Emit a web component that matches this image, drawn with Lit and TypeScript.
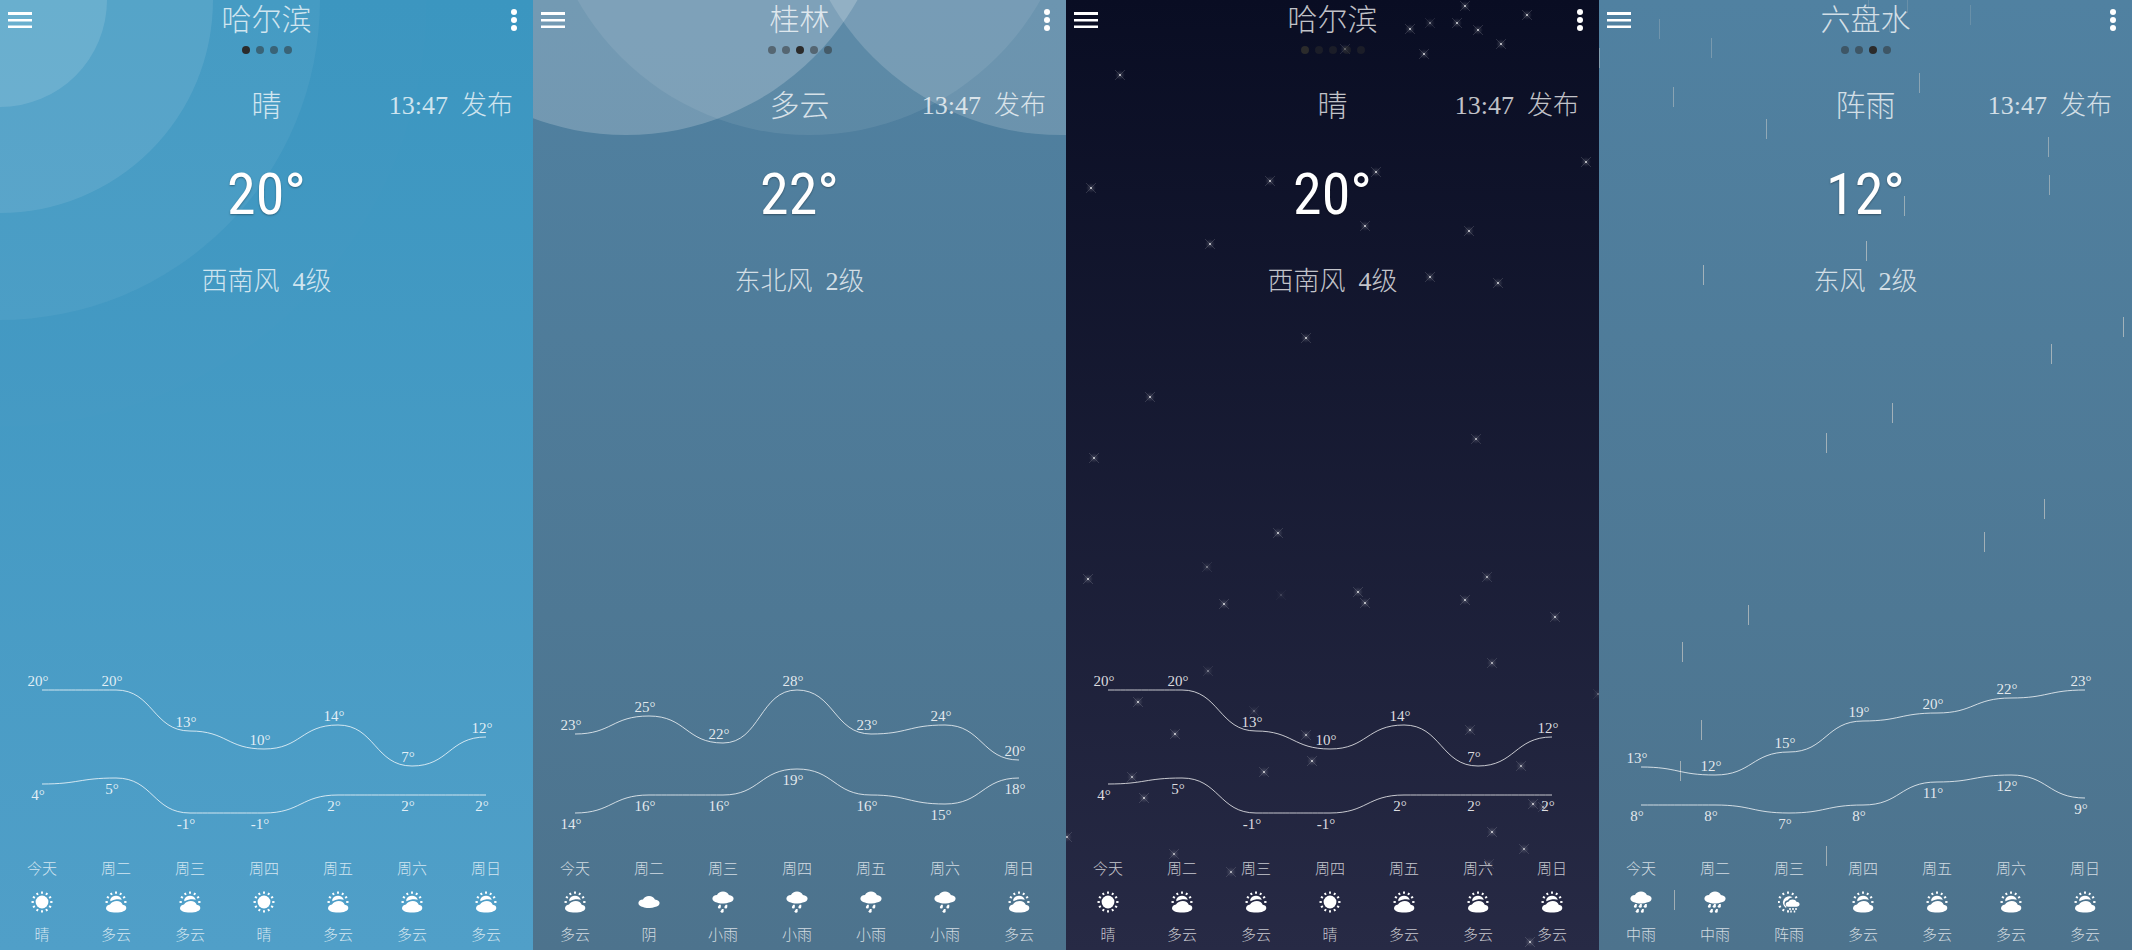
import { LitElement, html, svg, css } from 'lit';
import { customElement, property } from 'lit/decorators.js';
import { classMap } from 'lit/directives/class-map.js';

type Sky = 'clear' | 'cloudy' | 'night' | 'rain';
type Icon = 'sun' | 'partly' | 'overcast' | 'light-rain' | 'rain' | 'shower';

interface Day {
  label: string;
  icon: Icon;
  text: string;
  high: number;
  low: number;
}

interface City {
  name: string;
  sky: Sky;
  condition: string;
  time: string;
  temp: number;
  wind: string;
  force: string;
  pages: number;
  page: number;
  days: Day[];
}

const WEEK = ['今天', '周二', '周三', '周四', '周五', '周六', '周日'];

const ICON_TEXT: Record<Icon, string> = {
  sun: '晴',
  partly: '多云',
  overcast: '阴',
  'light-rain': '小雨',
  rain: '中雨',
  shower: '阵雨',
};

const week = (icons: Icon[], highs: number[], lows: number[]): Day[] =>
  WEEK.map((label, i) => ({
    label,
    icon: icons[i],
    text: ICON_TEXT[icons[i]],
    high: highs[i],
    low: lows[i],
  }));

const harbin = week(
  ['sun', 'partly', 'partly', 'sun', 'partly', 'partly', 'partly'],
  [20, 20, 13, 10, 14, 7, 12],
  [4, 5, -1, -1, 2, 2, 2],
);

const CITIES: City[] = [
  {
    name: '哈尔滨', sky: 'clear', condition: '晴', time: '13:47', temp: 20,
    wind: '西南风', force: '4级', pages: 4, page: 0, days: harbin,
  },
  {
    name: '桂林', sky: 'cloudy', condition: '多云', time: '13:47', temp: 22,
    wind: '东北风', force: '2级', pages: 5, page: 2,
    days: week(
      ['partly', 'overcast', 'light-rain', 'light-rain', 'light-rain', 'light-rain', 'partly'],
      [23, 25, 22, 28, 23, 24, 20],
      [14, 16, 16, 19, 16, 15, 18],
    ),
  },
  {
    name: '哈尔滨', sky: 'night', condition: '晴', time: '13:47', temp: 20,
    wind: '西南风', force: '4级', pages: 5, page: 0, days: harbin,
  },
  {
    name: '六盘水', sky: 'rain', condition: '阵雨', time: '13:47', temp: 12,
    wind: '东风', force: '2级', pages: 4, page: 2,
    days: week(
      ['rain', 'rain', 'shower', 'partly', 'partly', 'partly', 'partly'],
      [13, 12, 15, 19, 20, 22, 23],
      [8, 8, 7, 8, 11, 12, 9],
    ),
  },
];

// x, y and brightness of each star
const STARS: [number, number, number][] = [
  [399, 6, 0.9], [461, 15, 0.9], [364, 23, 0.6], [391, 23, 0.9], [344, 29, 0.9],
  [412, 30, 0.9], [435, 44, 0.9], [279, 49, 0.7], [358, 54, 0.9], [54, 75, 0.9],
  [520, 162, 0.9], [310, 172, 0.9], [204, 181, 0.9], [25, 188, 0.9], [299, 226, 0.9],
  [403, 231, 0.9], [144, 244, 0.9], [364, 277, 0.9], [432, 283, 0.9], [240, 338, 0.9],
  [84, 397, 0.9], [410, 439, 0.8], [28, 458, 0.9], [212, 533, 0.9], [141, 567, 0.5],
  [22, 579, 0.9], [215, 595, 0.2], [421, 577, 0.8], [292, 592, 0.9], [158, 604, 0.9],
  [299, 603, 0.9], [399, 600, 0.9], [489, 617, 0.9], [426, 663, 0.8], [142, 671, 0.5],
  [72, 702, 0.9], [188, 711, 0.4], [109, 734, 0.9], [240, 735, 0.8], [404, 730, 0.8],
  [246, 761, 0.9], [198, 772, 0.9], [455, 766, 0.8], [66, 777, 0.8], [78, 798, 0.9],
  [467, 804, 0.9], [477, 807, 0.7], [426, 832, 0.9], [1, 837, 0.8], [458, 849, 0.8],
  [108, 854, 0.8], [165, 872, 0.8], [423, 864, 0.6], [464, 942, 0.9], [532, 694, 0.4],
];

// x, top and opacity of each raindrop
const DROPS: [number, number, number][] = [
  [308, -7, 0.15], [269, -13, 0.15], [290, 12, 0.12], [371, 5, 0.15], [60, 19, 0.2],
  [112, 38, 0.25], [0, 48, 0.3], [320, 73, 0.35], [74, 87, 0.35], [167, 119, 0.4],
  [449, 137, 0.4], [450, 175, 0.4], [305, 196, 0.45], [267, 241, 0.5], [104, 265, 0.5],
  [524, 317, 0.5], [452, 344, 0.5], [293, 403, 0.5], [227, 433, 0.5], [445, 499, 0.5],
  [385, 532, 0.5], [149, 605, 0.5], [83, 642, 0.5], [102, 720, 0.5], [81, 761, 0.5],
  [227, 846, 0.5], [75, 890, 0.5],
];

@customElement('sky-backdrop')
export class SkyBackdrop extends LitElement {
  @property() sky: Sky = 'clear';

  static styles = css`
    :host { display: block; overflow: hidden; }
    svg { display: block; width: 100%; height: 100%; }
    .white { fill: #fff; }
    .arm { stroke: #fff; stroke-width: 1; stroke-opacity: 0.16; }
    .drop { fill: #f5e8da; }
  `;

  private shapes() {
    switch (this.sky) {
      case 'clear':
        return svg`
          <circle class="white" r="427" opacity="0.008"></circle>
          <circle class="white" r="320" opacity="0.05"></circle>
          <circle class="white" r="213" opacity="0.09"></circle>
          <circle class="white" r="107" opacity="0.12"></circle>`;
      case 'cloudy':
        return svg`
          <circle class="white" cx="93" cy="-131" r="266" opacity="0.2"></circle>
          <circle class="white" cx="276" cy="-131" r="266" opacity="0.08"></circle>
          <circle class="white" cx="528" cy="-131" r="266" opacity="0.16"></circle>`;
      case 'night':
        return svg`
          <defs>
            <radialGradient id="glow">
              <stop offset="0" stop-color="#fff" stop-opacity="0.2"></stop>
              <stop offset="1" stop-color="#fff" stop-opacity="0"></stop>
            </radialGradient>
          </defs>
          ${STARS.map(([x, y, o]) => svg`
            <g transform="translate(${x} ${y})" opacity=${o}>
              <circle r="5" fill="url(#glow)"></circle>
              <path class="arm" d="M-5-5 5 5M5-5-5 5"></path>
              <circle class="white" r="1" opacity="0.9"></circle>
            </g>`)}`;
      default:
        return DROPS.map(([x, y, o]) => svg`
          <rect class="drop" x=${x} y=${y} width="1" height="20" opacity=${o}></rect>`);
    }
  }

  render() {
    return html`<svg aria-hidden="true">${this.shapes()}</svg>`;
  }
}

const RAYS = Array.from({ length: 12 }, (_, i) => i * 30);

const ray = (angle: number) => svg`
  <path d="M0-10.5V-8.2" transform="rotate(${angle})" stroke="#fff" stroke-width="1.9"></path>`;

@customElement('weather-icon')
export class WeatherIcon extends LitElement {
  @property() name: Icon = 'sun';

  static styles = css`
    :host { display: block; width: 22px; height: 22px; }
    svg { display: block; width: 100%; height: 100%; fill: #fff; }
  `;

  private glyph() {
    const cloud = svg`<path d="M5 11.6C2.2 11.2.4 9.600.4 7.600.4 5.600 2.300 4.100 5 4 6 1.900 8.300.5 11 .5 13.800.5 15.900 1.900 16.900 3.900 19.700 4.100 21.600 5.600 21.600 7.600 21.600 9.700 19.600 11.300 16.800 11.500 15 12.300 13 12.600 11 12.500 9 12.600 6.700 12.400 5 11.600Z"></path>`;
    const drop = (x: number, y: number) => svg`
      <path d="M${x + 1.2} ${y} h1.600 v2.200 a1.500 1.500 0 0 1 -3 0z"></path>`;
    switch (this.name) {
      case 'sun':
        return svg`<g transform="translate(11 11)"><circle r="6.400"></circle>${RAYS.map(ray)}</g>`;
      case 'partly':
        return svg`
          <g transform="translate(11 11)">${[-90, -60, -30, 0, 30, 60, 90].map(ray)}</g>
          <path d="M5.200 8.700C6 6.300 8.200 4.700 11 4.700 13.800 4.700 16 6.300 16.800 8.700 15.500 8.200 13.500 8 11.500 8.300 9.500 8.500 7.500 9.200 5.400 10.200Z"></path>
          <path d="M1 17.300C1 15.300 2.600 13.900 5 13.500 6.200 11.300 9 9.900 11.800 9.900 14.700 9.900 17 11.500 17.700 13.700 20 14 21.300 15.200 21.300 17 21.300 19.800 17 21.600 11.100 21.600 5.200 21.600 1 20 1 17.300Z"></path>`;
      case 'overcast':
        return svg`<g transform="translate(0 4.500)">${cloud}</g>`;
      case 'light-rain':
        return svg`${cloud}${drop(6, 13.8)}${drop(12.500, 13.8)}${drop(8.800, 18)}`;
      case 'rain':
        return svg`${cloud}${drop(4, 13)}${drop(9, 13)}${drop(14, 13)}${drop(6, 18)}${drop(11, 18)}`;
      default:
        return svg`
          <g transform="translate(10 11)">${[180, 210, 240, 270, 300, 330, 0, 30, 60].map(ray)}</g>
          <path d="M14.500 6.200A6.200 6.200 0 1 0 8 17L8.500 15.400C6.700 14.500 6.300 13 6.700 11.500 7.200 9.900 8.700 9.300 9.800 9.200 10.600 7.600 12.400 6.700 14.500 6.200Z"></path>
          <path d="M10.200 15.700C8.600 15.400 7.700 14.500 7.700 13.200 7.700 11.800 8.900 10.800 10.500 10.700 11.200 9.200 12.700 8.400 14.500 8.400 16.300 8.400 17.800 9.300 18.400 10.700 20.400 10.800 21.600 11.900 21.600 13.300 21.600 14.700 20.300 15.700 18.500 15.800Z"></path>
          <path d="M12 17v2M15 17v2M18 17v2M13 19.500v2M16.500 19.500v2" stroke="#fff" stroke-width="1.500"></path>`;
    }
  }

  render() {
    return html`<svg viewBox="0 0 22 22" aria-hidden="true">${this.glyph()}</svg>`;
  }
}

@customElement('temperature-chart')
export class TemperatureChart extends LitElement {
  @property({ attribute: false }) days: Day[] = [];

  static styles = css`
    :host { display: block; }
    svg { display: block; width: 100%; height: auto; overflow: visible; }
    .line { fill: none; stroke: rgba(255, 255, 255, 0.75); stroke-width: 1; }
    .value {
      fill: rgba(255, 255, 255, 0.85);
      font-size: 15px;
      text-anchor: middle;
    }
  `;

  render() {
    const step = 74;
    const top = 24;
    const span = 123;
    const max = Math.max(...this.days.map((d) => d.high));
    const min = Math.min(...this.days.map((d) => d.low));
    const x = (i: number) => step / 2 + i * step;
    const y = (t: number) => Math.round(top + ((max - t) / (max - min)) * span);
    const curve = (temps: number[]) =>
      temps
        .map((t, i) =>
          i === 0
            ? `M${x(0)} ${y(t)}`
            : `C${x(i) - step / 2} ${y(temps[i - 1])} ${x(i) - step / 2} ${y(t)} ${x(i)} ${y(t)}`,
        )
        .join('');
    return html`
      <svg viewBox="0 0 ${step * 7} 171" role="img" aria-label="七日气温">
        <path class="line" d=${curve(this.days.map((d) => d.high))}></path>
        <path class="line" d=${curve(this.days.map((d) => d.low))}></path>
        ${this.days.map((d, i) => svg`
          <text class="value" x=${x(i) - 4} y=${y(d.high) - 4}>${d.high}°</text>
          <text class="value" x=${x(i) - 4} y=${y(d.low) + 16}>${d.low}°</text>`)}
      </svg>
    `;
  }
}

@customElement('city-weather')
export class CityWeather extends LitElement {
  @property({ attribute: false }) city!: City;

  static styles = css`
    :host { display: block; min-width: 0; }
    .panel {
      position: relative;
      isolation: isolate;
      display: flex;
      flex-direction: column;
      min-height: 100vh;
      overflow: hidden;
      color: rgba(255, 255, 255, 0.75);
    }
    .clear { background: linear-gradient(#3b96c0, #509fc8); }
    .cloudy, .rain { background: linear-gradient(#5081a1, #4d738d); }
    .night { background: linear-gradient(#090d23, #272a45); }
    .backdrop { position: absolute; inset: 0; z-index: -1; }
    .bar {
      display: flex;
      align-items: center;
      justify-content: space-between;
      height: 40px;
      padding: 0 8px;
    }
    h1 { margin: 0; font-size: 30px; line-height: 40px; font-weight: inherit; }
    .tool {
      display: flex;
      justify-content: center;
      width: 24px;
      padding: 0;
      border: 0;
      background: none;
      cursor: pointer;
    }
    .tool svg { display: block; width: 24px; height: 24px; fill: #fff; }
    .dots { display: flex; justify-content: center; gap: 6px; padding: 6px 0; }
    .dot {
      width: 8px;
      height: 8px;
      padding: 0;
      border: 0;
      border-radius: 50%;
      background: #2b2b2b;
      opacity: 0.5;
    }
    .dot.current { opacity: 1; }
    .now {
      display: grid;
      grid-template-columns: 1fr auto 1fr;
      align-items: center;
      margin-top: 26px;
      padding: 0 20px;
      line-height: 40px;
    }
    .condition { grid-column: 2; margin: 0; font-size: 30px; }
    .published, .wind {
      display: flex;
      gap: 13px;
      margin: 0;
      font-size: 26px;
      line-height: 40px;
    }
    .published { justify-content: flex-end; }
    .temp {
      margin: 32px 0;
      text-align: center;
      color: #fff;
      font-family: 'Roboto Condensed', 'Liberation Sans Narrow', 'Liberation Sans', sans-serif;
      font-weight: 400;
      font-size: 58px;
      line-height: 72px;
      text-shadow: 0 1px 2px rgba(0, 0, 0, 0.35);
    }
    .wind { justify-content: center; }
    .forecast { margin-top: auto; padding: 32px 10px 5px 5px; }
    .days {
      display: grid;
      grid-template-columns: repeat(7, 1fr);
      margin: 22px 0 0;
      padding: 0;
      list-style: none;
    }
    .day {
      display: flex;
      flex-direction: column;
      align-items: center;
      gap: 12px;
      font-size: 15px;
      line-height: 20px;
    }
  `;

  render() {
    const c = this.city;
    return html`
      <section class="panel ${c.sky}">
        <sky-backdrop class="backdrop" .sky=${c.sky}></sky-backdrop>
        <header class="bar">
          <button class="tool" type="button" aria-label="菜单">
            <svg viewBox="0 0 24 24" aria-hidden="true">
              <path d="M0 4h24v3H0zM0 11h24v2.500H0zM0 17.500h24v2.500H0z"></path>
            </svg>
          </button>
          <h1>${c.name}</h1>
          <button class="tool" type="button" aria-label="更多">
            <svg viewBox="0 0 24 24" aria-hidden="true">
              <circle cx="13" cy="4" r="3"></circle>
              <circle cx="13" cy="12" r="3"></circle>
              <circle cx="13" cy="20" r="3"></circle>
            </svg>
          </button>
        </header>
        <nav class="dots" aria-label="城市">
          ${Array.from({ length: c.pages }, (_, i) => html`
            <button
              type="button"
              class=${classMap({ dot: true, current: i === c.page })}
              aria-label="${i + 1}"
            ></button>`)}
        </nav>
        <div class="now">
          <p class="condition">${c.condition}</p>
          <p class="published"><time>${c.time}</time><span>发布</span></p>
        </div>
        <p class="temp">${c.temp}°</p>
        <p class="wind"><span>${c.wind}</span><span>${c.force}</span></p>
        <div class="forecast">
          <temperature-chart .days=${c.days}></temperature-chart>
          <ol class="days">
            ${c.days.map((d) => html`
              <li class="day">
                <span>${d.label}</span>
                <weather-icon .name=${d.icon}></weather-icon>
                <span>${d.text}</span>
              </li>`)}
          </ol>
        </div>
      </section>
    `;
  }
}

@customElement('app-root')
export class AppRoot extends LitElement {
  static styles = css`
    :host {
      display: block;
      font-family: 'Liberation Serif', 'Noto Sans CJK SC', serif;
      font-weight: 300;
    }
    .cities { display: grid; grid-template-columns: repeat(4, 1fr); }
  `;

  render() {
    return html`
      <main class="cities">
        ${CITIES.map((city) => html`<city-weather .city=${city}></city-weather>`)}
      </main>
    `;
  }
}
